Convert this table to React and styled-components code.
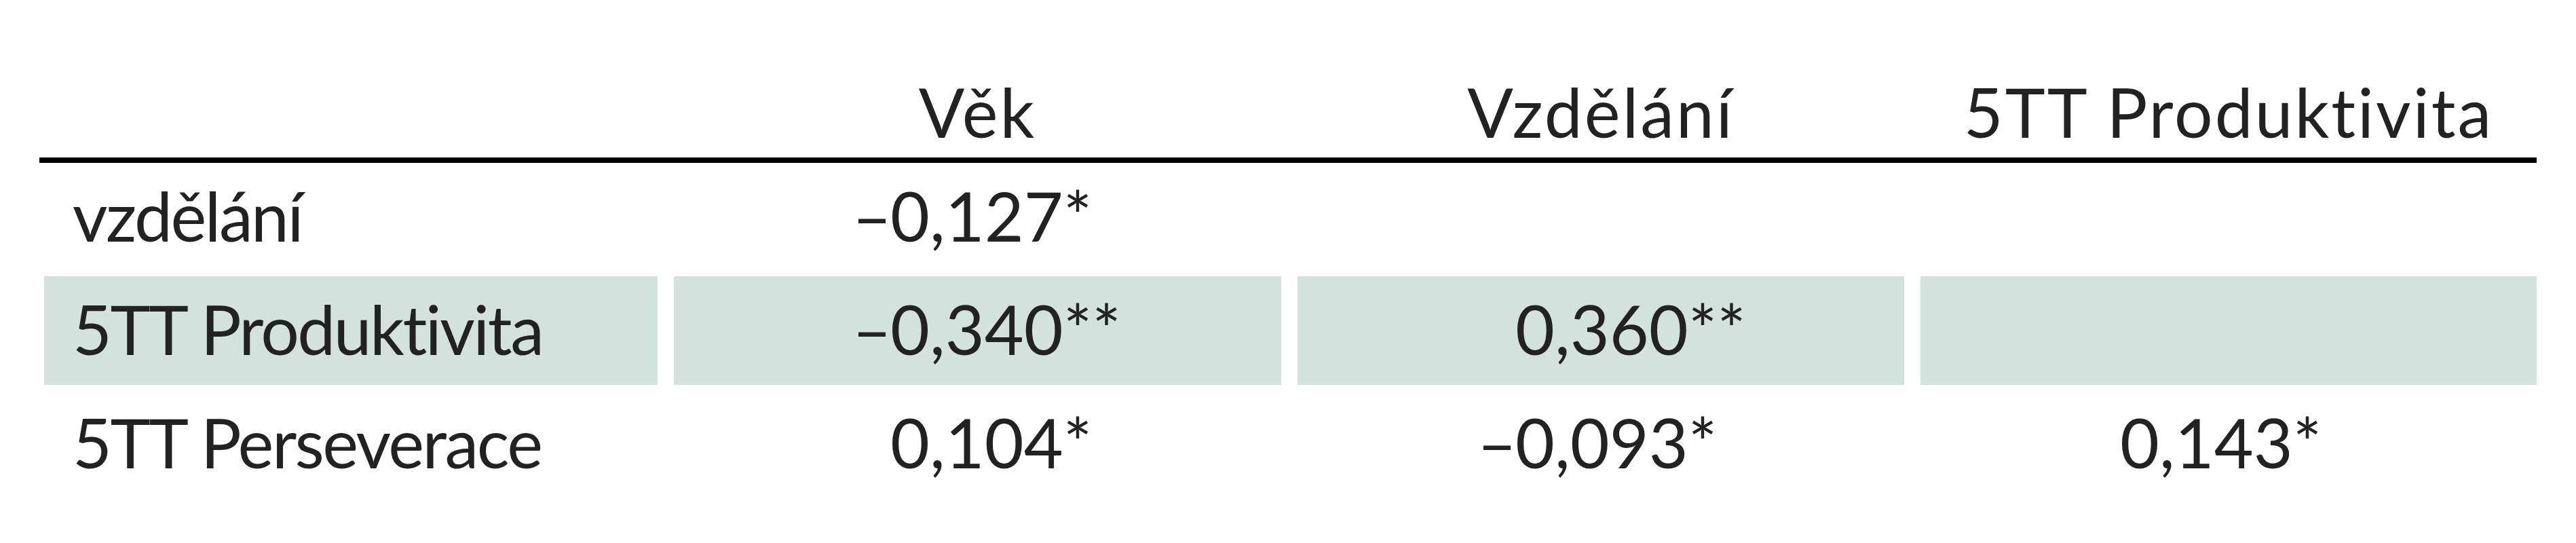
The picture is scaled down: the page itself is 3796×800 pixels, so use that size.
import React from 'react';
import styled, { createGlobalStyle } from 'styled-components';

const GlobalStyle = createGlobalStyle`
  body {
    margin: 0;
    background: #fff;
  }
`;

const Page = styled.div`
  padding-left: 58px;
  font-family: Lato, 'Open Sans', sans-serif;
  font-size: 100px;
  color: #222;
`;

const Table = styled.div`
  width: 3680px;
`;

const Grid = styled.div`
  display: grid;
  grid-template-columns: 904px 895px 894px 908px;
  column-gap: 24px;
  padding-left: 7px;
`;

const HeaderRow = styled(Grid)`
  height: 232px;
  border-bottom: 8px solid #000;
`;

const HeadCell = styled.div`
  display: flex;
  align-items: flex-end;
  justify-content: center;
  padding-bottom: 8px;
  line-height: 120px;
  letter-spacing: 3px;
  white-space: nowrap;
`;

const Body = styled.div`
  display: flex;
  flex-direction: column;
  gap: 7px;
`;

const Cell = styled.div`
  height: 160px;
  line-height: 154px;
  white-space: nowrap;
  padding-left: ${(p) => p.$indent}px;
  letter-spacing: ${(p) => (p.$label ? '-2.5px' : '0')};
  background: ${(p) => (p.$shaded ? '#d3e2dd' : 'transparent')};
`;

const Minus = styled.span`
  display: inline-block;
  width: 56px;
  margin-left: -56px;
`;

const headers = ['', 'Věk', 'Vzdělání', '5TT Produktivita'];
const indents = [319, 321, 294];

const rows = [
  { label: 'vzdělání', values: ['–0,127*', '', ''] },
  { label: '5TT Produktivita', values: ['–0,340**', '0,360**', ''], shaded: true },
  { label: '5TT Perseverace', values: ['0,104*', '–0,093*', '0,143*'] },
];

const Value = ({ text }) => {
  if (text.startsWith('–')) {
    return (
      <>
        <Minus>–</Minus>
        {text.slice(1)}
      </>
    );
  }
  return text;
};

export default function App() {
  return (
    <Page>
      <GlobalStyle />
      <Table>
        <HeaderRow>
          {headers.map((h, i) => (
            <HeadCell key={i}>{h}</HeadCell>
          ))}
        </HeaderRow>
        <Body>
          {rows.map((r) => (
            <Grid key={r.label}>
              <Cell $label $indent={42} $shaded={r.shaded}>
                {r.label}
              </Cell>
              {r.values.map((v, i) => (
                <Cell key={i} $indent={indents[i]} $shaded={r.shaded}>
                  <Value text={v} />
                </Cell>
              ))}
            </Grid>
          ))}
        </Body>
      </Table>
    </Page>
  );
}
